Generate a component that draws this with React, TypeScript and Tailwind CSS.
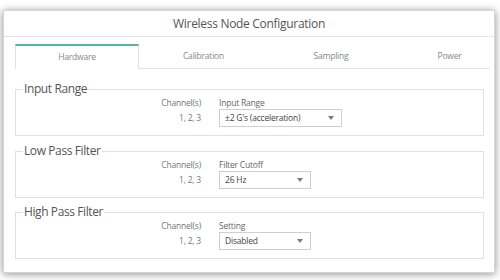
import React from "react";

const font = { fontFamily: '"Open Sans", "Liberation Sans", sans-serif' };

function Caret() {
  return (
    <svg width="6" height="4" viewBox="0 0 6 4" className="shrink-0">
      <path d="M0 0 L6 0 L3 4 Z" fill="#7a7a7a" />
    </svg>
  );
}

function Select({ value, width }: { value: string; width: string }) {
  return (
    <div
      className={`flex h-[18px] items-center justify-between border border-[#cfcfcf] bg-white pl-[5px] pr-[7px] text-[8.5px] tracking-[-0.2px] text-[#444] ${width}`}
    >
      <span>{value}</span>
      <Caret />
    </div>
  );
}

function Group({
  title,
  label,
  value,
  width,
  className,
}: {
  title: string;
  label: string;
  value: string;
  width: string;
  className: string;
}) {
  return (
    <fieldset className={`w-[469px] border border-[#e0e0e0] pb-[8px] ${className}`}>
      <legend className="ml-[7px] px-[1px] text-[12px] leading-[16px] tracking-[-0.4px] text-[#555]">{title}</legend>
      <div className="flex">
        <div className="w-[185px] text-right text-[8.5px] tracking-[-0.2px] text-[#777]">
          <div className="h-[12px] leading-[12px]">Channel(s)</div>
          <div className="h-[18px] leading-[18px]">1, 2, 3</div>
        </div>
        <div className="ml-[18px] flex flex-col">
          <div className="h-[12px] text-[8.5px] leading-[12px] tracking-[-0.2px] text-[#666]">{label}</div>
          <Select value={value} width={width} />
        </div>
      </div>
    </fieldset>
  );
}

export default function App() {
  return (
    <div className="h-[280px] w-[500px] overflow-hidden bg-white pl-[3px] pt-[10px]" style={font}>
      <div className="h-[263px] w-[492px] border border-[#d6d6d6] bg-white shadow-[0_1px_8px_rgba(0,0,0,0.45)]">
        <div className="flex h-[26px] items-center justify-center border-b border-[#e3e3e3] text-[12px] tracking-[-0.3px] text-[#555]">
          Wireless Node Configuration
        </div>
        <div className="pl-[11px] pt-[7px]">
          <div className="flex h-[25px] w-[475px] text-[8.5px] tracking-[-0.2px] text-[#888]">
            <div className="flex w-[124px] items-center justify-center border-x border-t-2 border-x-[#e2e2e2] border-t-[#55b3a4] bg-white">
              Hardware
            </div>
            <div className="flex w-[129px] items-center justify-center border-b border-[#e2e2e2]">Calibration</div>
            <div className="flex w-[126px] items-center justify-center border-b border-[#e2e2e2]">Sampling</div>
            <div className="flex flex-1 items-center justify-center border-b border-[#e2e2e2] pl-[15px]">Power</div>
          </div>
          <Group className="mt-[12px]" title="Input Range" label="Input Range" value="±2 G's (acceleration)" width="w-[123px]" />
          <Group className="mt-[7px]" title="Low Pass Filter" label="Filter Cutoff" value="26 Hz" width="w-[92px]" />
          <Group className="mt-[6px]" title="High Pass Filter" label="Setting" value="Disabled" width="w-[92px]" />
        </div>
      </div>
    </div>
  );
}
